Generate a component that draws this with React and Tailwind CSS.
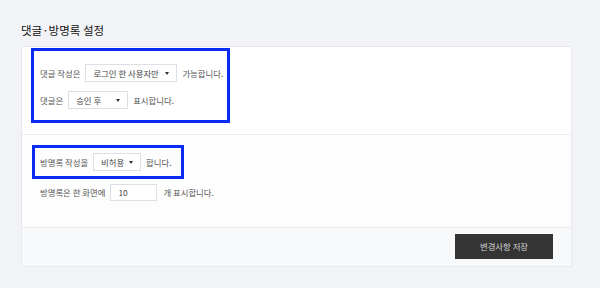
const font = { fontFamily: '"Noto Sans CJK KR", "Noto Sans", sans-serif' };

function Select({ value, width }) {
  return (
    <div
      className={`flex h-[18px] items-center justify-between border border-[#dcdfe5] bg-white pl-[7px] pr-[7px] text-[#444] ${width}`}
    >
      <span>{value}</span>
      <span className="h-0 w-0 border-x-[2.5px] border-t-[3px] border-x-transparent border-t-[#333]" />
    </div>
  );
}

export default function App() {
  return (
    <div className="h-[288px] w-[600px] bg-[#f2f3f6] pl-[21px] pt-[22px] text-[8.4px] text-[#555]" style={font}>
      <h2 className="h-[24px] text-[11.5px] font-normal leading-[16px] text-[#111]">댓글·방명록 설정</h2>
      <div className="relative w-[551px] border border-[#e6e8ec] bg-white">
        <div className="flex h-[88px] flex-col gap-[9px] border-b border-[#eceef1] pl-[18px] pt-[17px]">
          <div className="flex items-center gap-[5px]">
            <span>댓글 작성은</span>
            <Select value="로그인 한 사용자만" width="w-[92px]" />
            <span>가능합니다.</span>
          </div>
          <div className="flex items-center gap-[5px]">
            <span>댓글은</span>
            <Select value="승인 후" width="w-[60px]" />
            <span>표시합니다.</span>
          </div>
        </div>
        <div className="flex h-[93px] flex-col gap-[13px] border-b border-[#eceef1] bg-[#fdfdfe] pl-[18px] pt-[18px]">
          <div className="flex items-center gap-[5px]">
            <span>방명록 작성을</span>
            <Select value="비허용" width="w-[48px]" />
            <span>합니다.</span>
          </div>
          <div className="flex items-center gap-[5px]">
            <span>방명록은 한 화면에</span>
            <div className="flex h-[17px] w-[47px] items-center border border-[#dcdfe5] bg-white pl-[7px] text-[#444]">10</div>
            <span className="ml-[1px]">개 표시합니다.</span>
          </div>
        </div>
        <div className="flex h-[38px] items-start justify-end bg-[#f8f9fb] pr-[18px] pt-[6px]">
          <button className="h-[25px] w-[98px] bg-[#333433] text-[8.4px] text-[#d8d8d8]">변경사항 저장</button>
        </div>
        <div className="absolute left-[9px] top-[1px] h-[75px] w-[199px] border-[3px] border-[#0a2bf5]" />
        <div className="absolute left-[10px] top-[98px] h-[34px] w-[152px] border-[3px] border-[#0a2bf5]" />
      </div>
    </div>
  );
}
